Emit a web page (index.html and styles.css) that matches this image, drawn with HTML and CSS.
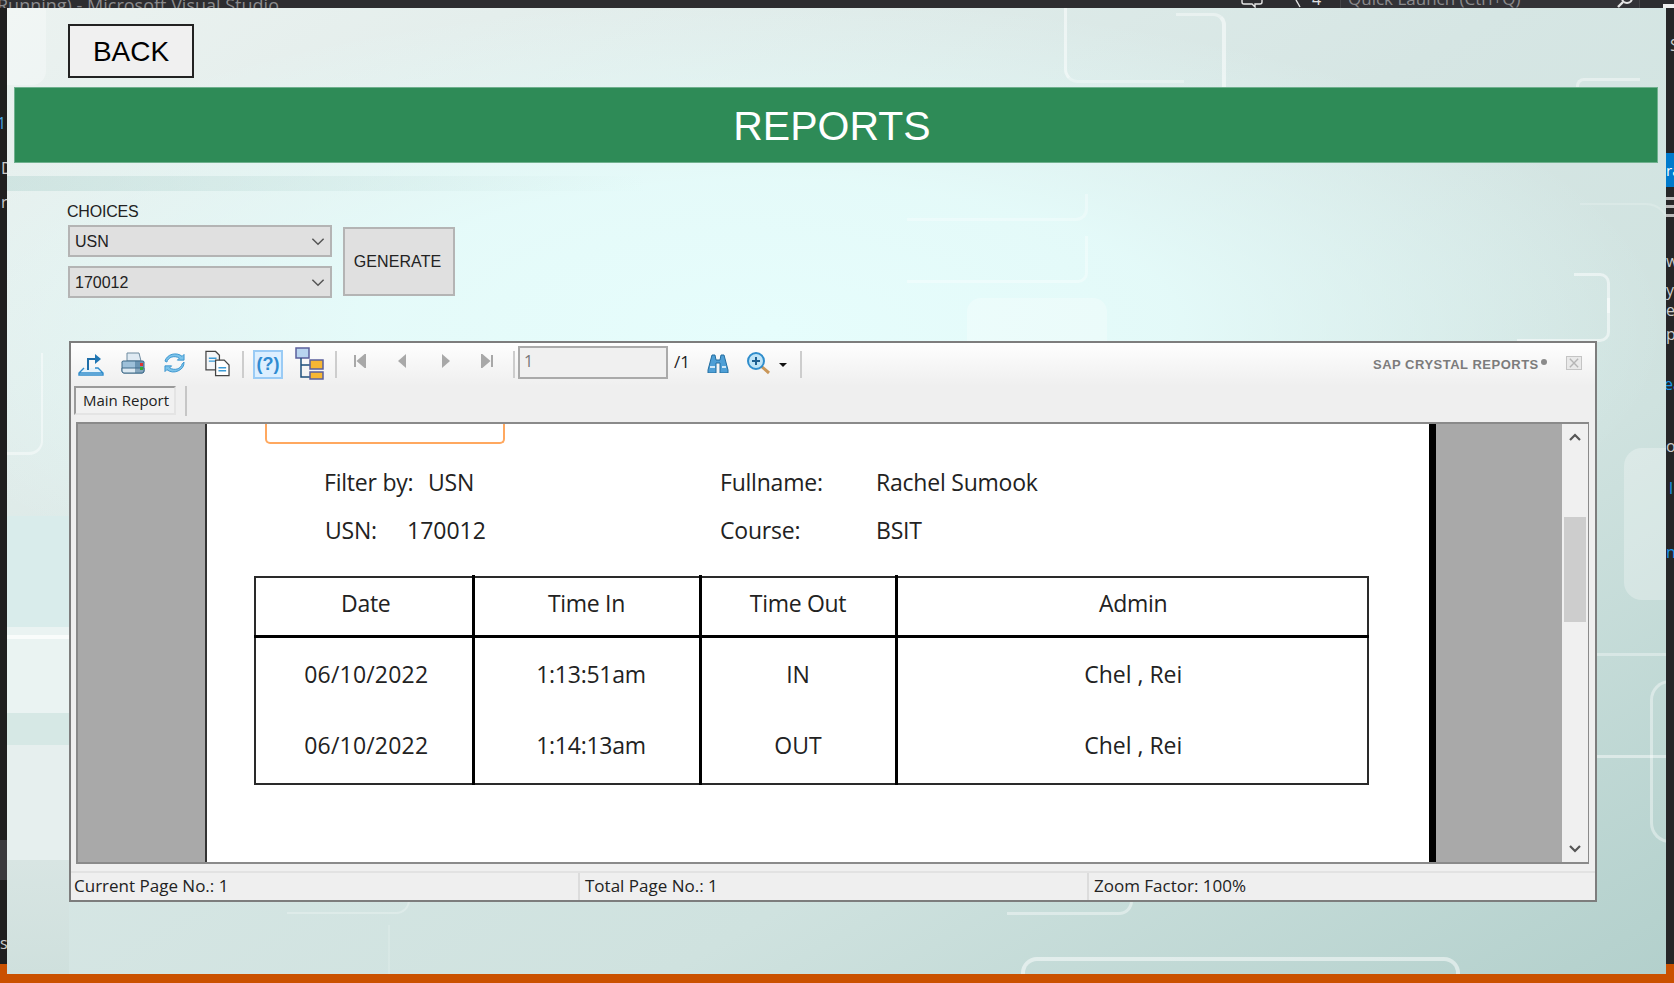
FILE: index.html
```html
<!DOCTYPE html>
<html lang="en">
<head>
<meta charset="utf-8">
<title>Reports</title>
<link rel="stylesheet" href="styles.css">
</head>
<body>
<div class="desktop">
  <div class="vs-top">
    <span class="vs-title">Running) - Microsoft Visual Studio</span>
    <svg class="vs-chat" viewBox="0 0 22 8"><path d="M1 0v2a2 2 0 0 0 2 2h8l3 3V4h5a2 2 0 0 0 2-2V0" fill="none" stroke="#e6e6e6" stroke-width="1.400"/></svg>
    <svg class="vs-flag" viewBox="0 0 6 8"><path d="M1 0l4 7" fill="none" stroke="#e6e6e6" stroke-width="1.400"/></svg>
    <span class="vs-count">4</span>
    <div class="vs-quickbox"><span class="vs-quick">Quick Launch (Ctrl+Q)</span></div>
    <svg class="vs-search" viewBox="0 0 18 8"><circle cx="11" cy="-2" r="5" fill="none" stroke="#e6e6e6" stroke-width="2"/><path d="M7 2l-5 5" stroke="#e6e6e6" stroke-width="2.400"/></svg>
    <span class="vs-corner"></span>
  </div>
  <div class="vs-left">
    <span class="vs-row"></span>
    <span class="frag frag-l1">1</span>
    <span class="frag frag-l2">D</span>
    <span class="frag frag-l3">r</span>
    <span class="frag frag-l4">s</span>
  </div>
  <div class="vs-right">
    <span class="frag frag-r1">S</span>
    <span class="vs-tab">ra</span>
    <span class="vs-burger"></span>
    <span class="frag frag-r2">w</span>
    <span class="frag frag-r3">y</span>
    <span class="frag frag-r4">e</span>
    <span class="frag frag-r5">p</span>
    <span class="frag blue frag-r6">ea</span>
    <span class="frag frag-r7">o</span>
    <span class="frag blue frag-r8">l</span>
    <span class="frag blue frag-r9">n</span>
  </div>
  <div class="vs-bottom"></div>

  <main class="window">
    <div class="band"></div>
    <div class="side-bands"></div>
    <div class="blob b1"></div>
    <div class="blob b2"></div>
    <div class="blob b3"></div>
    <div class="decor d-a"></div>
    <div class="decor d-b"></div>
    <div class="decor d-c"></div>
    <div class="decor d-d"></div>
    <div class="decor d-e"></div>
    <div class="decor d-f"></div>
    <div class="decor d-g"></div>
    <div class="decor d-h"></div>
    <div class="decor d-i"></div>
    <div class="decor d-j"></div>
    <div class="decor d-k"></div>
    <div class="decor d-l"></div>
    <div class="decor d-m"></div>
    <div class="decor d-n"></div>
    <div class="decor d-o"></div>
    <div class="decor d-p"></div>
    <div class="decor d-q"></div>

    <div class="content">
      <button class="back">BACK</button>
      <h1 class="banner">REPORTS</h1>

      <section class="controls">
        <div class="choices">
          <label class="choices-label">CHOICES</label>
          <div class="combo"><span>USN</span><svg class="chev" viewBox="0 0 12 8"><path d="M1 1.500 6 6.500 11 1.500" fill="none" stroke="#555" stroke-width="1.300"/></svg></div>
          <div class="combo"><span>170012</span><svg class="chev" viewBox="0 0 12 8"><path d="M1 1.500 6 6.500 11 1.500" fill="none" stroke="#555" stroke-width="1.300"/></svg></div>
        </div>
        <button class="generate">GENERATE</button>
      </section>

      <section class="viewer">
        <div class="toolbar">
          <svg class="ti i-export" viewBox="0 0 26 24"><path d="M6 16 1 21v2h24v-2l-5-5h-3M1 21h24" fill="#e4f2fb" stroke="#2f8ccb" stroke-width="1.400"/><path d="M10 18V7h8" fill="none" stroke="#1f6ea8" stroke-width="2"/><path d="M17 2l6 5-6 5z" fill="#1f76b4"/></svg>
          <svg class="ti i-print" viewBox="0 0 24 22"><path d="M6 9V1h12l2 8z" fill="#dfeaf3" stroke="#6f8ba0"/><path d="M2 9h20a1.500 1.500 0 0 1 1 2v8a2 2 0 0 1-2 2H3a2 2 0 0 1-2-2v-8a1.500 1.500 0 0 1 1-2z" fill="#9dc0d9" stroke="#3f6a88"/><path d="M1 16h22v3a2 2 0 0 1-2 2H3a2 2 0 0 1-2-2z" fill="#dce9f2" stroke="#3f6a88"/><path d="M14 9h9v12h-9z" fill="#3f6f92" opacity=".55"/><rect x="19" y="11" width="3" height="3" fill="#d33"/><rect x="19" y="15" width="3" height="3" fill="#3a3"/></svg>
          <svg class="ti i-refresh" viewBox="0 0 22 20"><path d="M3 9a8 7 0 0 1 13-4l-2 2h7V1l-2 2A11 10 0 0 0 1 8z" fill="#7cc3ea" stroke="#3a95cf"/><path d="M19 11a8 7 0 0 1-13 4l2-2H1v6l2-2a11 10 0 0 0 18-8z" fill="#7cc3ea" stroke="#3a95cf"/></svg>
          <svg class="ti i-copy" viewBox="0 0 26 27"><path d="M1 1h10l4 4v15H1z" fill="#f4f6f8" stroke="#444" stroke-width="1.300"/><path d="M4 8h8M4 11h8" stroke="#3b9bd6" stroke-width="1.500"/><path d="M11 10h9l5 5v11H11z" fill="#fff" stroke="#444" stroke-width="1.300"/><path d="M14 18h8M14 21h8" stroke="#3b9bd6" stroke-width="1.500"/></svg>
          <span class="tsep s1"></span>
          <span class="help">(?)</span>
          <svg class="ti i-tree" viewBox="0 0 30 33"><rect x="1" y="1" width="13" height="10" fill="#b8d4ef" stroke="#5a5f9c" stroke-width="1.500"/><path d="M6 11v19h9M6 18h9" fill="none" stroke="#1d4f7c" stroke-width="1.500"/><rect x="15" y="13" width="13" height="9" fill="#f7b733" stroke="#5a5f9c" stroke-width="1.500"/><rect x="15" y="25" width="13" height="7" fill="#f7b733" stroke="#5a5f9c" stroke-width="1.500"/></svg>
          <span class="tsep s2"></span>
          <svg class="ti i-first" viewBox="0 0 12 14"><path d="M1 1v12M11 1v12L4 7z" fill="#a8a8a8" stroke="#a8a8a8" stroke-width="2"/></svg>
          <svg class="ti i-prev" viewBox="0 0 9 14"><path d="M8 0v14L0 7z" fill="#a8a8a8"/></svg>
          <svg class="ti i-next" viewBox="0 0 9 14"><path d="M1 0v14l8-7z" fill="#a8a8a8"/></svg>
          <svg class="ti i-last" viewBox="0 0 12 14"><path d="M11 1v12M1 1v12l7-6z" fill="#a8a8a8" stroke="#a8a8a8" stroke-width="2"/></svg>
          <span class="tsep s3"></span>
          <input class="page-box" value="1" readonly>
          <span class="page-total">/1</span>
          <svg class="ti i-find" viewBox="0 0 22 19"><path d="M5 1h3l1 5h4l1-5h3l4 15v3h-8V9h-4v10H1v-3z" fill="#4e9fd6" stroke="#236d9f"/><path d="M3 13h5M15 13h4" stroke="#cfe8f8" stroke-width="2"/></svg>
          <svg class="ti i-zoom" viewBox="0 0 24 23"><path d="M14 14l8 7" stroke="#c99658" stroke-width="3"/><circle cx="9" cy="9" r="8" fill="#bfe4f7" stroke="#2f8dcc" stroke-width="2"/><path d="M5 9h8M9 5v8" stroke="#1e5f90" stroke-width="2"/></svg>
          <span class="caret"></span>
          <span class="tsep s4"></span>
          <span class="brand">SAP CRYSTAL REPORTS<i class="brand-dot"></i></span>
          <span class="close-x"><svg viewBox="0 0 15 13"><path d="M3 2l9 9M12 2l-9 9" stroke="#b5b5b5" stroke-width="1.500"/></svg></span>
        </div>
        <div class="tabs">
          <span class="tab">Main Report</span>
          <span class="tab-sep"></span>
        </div>

        <div class="report">
          <div class="gutter-left"></div>
          <div class="page">
            <div class="orange-box"></div>
            <div class="info">
              <div class="info-row">
                <span class="lbl-a">Filter by:</span><span class="val-a">USN</span>
                <span class="lbl-b">Fullname:</span><span>Rachel Sumook</span>
              </div>
              <div class="info-row">
                <span class="lbl-a2">USN:</span><span class="val-a2">170012</span>
                <span class="lbl-b">Course:</span><span>BSIT</span>
              </div>
            </div>
            <table class="rows">
              <colgroup><col class="c1"><col class="c2"><col class="c3"><col class="c4"></colgroup>
              <thead>
                <tr><th>Date</th><th>Time In</th><th>Time Out</th><th>Admin</th></tr>
              </thead>
              <tbody>
                <tr><td class="date">06/10/2022</td><td class="time">1:13:51am</td><td>IN</td><td>Chel , Rei</td></tr>
                <tr class="last"><td class="date">06/10/2022</td><td class="time">1:14:13am</td><td>OUT</td><td>Chel , Rei</td></tr>
              </tbody>
            </table>
          </div>
          <div class="page-edge"></div>
          <div class="gutter-right"></div>
          <div class="scrollbar">
            <svg class="arrow" viewBox="0 0 12 8"><path d="M1 7 6 2l5 5" fill="none" stroke="#555" stroke-width="2.200"/></svg>
            <div class="track"><div class="thumb"></div></div>
            <svg class="arrow" viewBox="0 0 12 8"><path d="M1 1l5 5 5-5" fill="none" stroke="#555" stroke-width="2.200"/></svg>
          </div>
        </div>

        <div class="status">
          <span class="st st1">Current Page No.: 1</span>
          <span class="st st2">Total Page No.: 1</span>
          <span class="st st3">Zoom Factor: 100%</span>
        </div>
      </section>
    </div>
  </main>
</div>
</body>
</html>
```
FILE: styles.css
```css
* { box-sizing: border-box; }
html, body { margin: 0; padding: 0; }
body { width: 1674px; height: 983px; overflow: hidden; background: #1e1e1e; font-family: "Liberation Sans", Arial, sans-serif; }
.desktop { position: relative; width: 1674px; height: 983px; overflow: hidden; }

/* IDE windows behind the application */
.vs-top { position: absolute; left: 0; top: 0; width: 100%; height: 8px; background: #2d2d30; overflow: hidden; color: #8b8b8d; font: 18px "Open Sans", sans-serif; }
.vs-title { position: absolute; left: -3px; top: -7px; white-space: nowrap; }
.vs-chat { position: absolute; left: 1241px; top: 0; width: 22px; height: 8px; }
.vs-flag { position: absolute; left: 1295px; top: 0; width: 6px; height: 8px; }
.vs-count { position: absolute; left: 1312px; top: -12px; color: #e0e0e0; font-size: 16px; }
.vs-quickbox { position: absolute; left: 1340px; top: 0; width: 300px; height: 8px; background: #333337; border-left: 1px solid #454548; border-right: 1px solid #454548; }
.vs-quick { position: absolute; left: 7px; top: -13px; font-size: 17px; white-space: nowrap; }
.vs-search { position: absolute; left: 1616px; top: 0; width: 18px; height: 8px; }
.vs-corner { position: absolute; right: 0; top: 4px; width: 11px; height: 4px; background: #eee; }
.vs-left { position: absolute; left: 0; top: 8px; bottom: 19px; width: 7px; background: #1f1f1f; overflow: hidden; color: #ccc; font: 16px "Open Sans", sans-serif; }
.vs-row { position: absolute; left: 0; top: 832px; width: 7px; height: 40px; background: #3a3a3d; }
.vs-right { position: absolute; right: 0; top: 8px; bottom: 19px; width: 8px; background: #262628; overflow: hidden; color: #ccc; font: 16px "Open Sans", sans-serif; }
.vs-bottom { position: absolute; left: 0; right: 0; bottom: 0; height: 19px; background: #ca5100; }
.frag { position: absolute; line-height: 20px; }
.blue { color: #1c97ea; }
.frag-l1 { left: -3px; top: 105px; color: #4aa3e0; }
.frag-l2 { left: 1px; top: 150px; }
.frag-l3 { left: 1px; top: 184px; }
.frag-l4 { left: 0; top: 925px; }
.frag-r1 { left: 4px; top: 27px; }
.frag-r2 { left: 0; top: 243px; }
.frag-r3 { left: 0; top: 272px; }
.frag-r4 { left: 0; top: 292px; }
.frag-r5 { left: 0; top: 316px; }
.frag-r6 { left: -2px; top: 366px; }
.frag-r7 { left: 0; top: 428px; }
.frag-r8 { left: 3px; top: 470px; }
.frag-r9 { left: 0; top: 534px; }
.vs-tab { position: absolute; left: 0; top: 145px; width: 8px; height: 34px; background: #007acc; color: #fff; line-height: 34px; font-size: 15px; }
.vs-burger { position: absolute; left: 0; top: 189px; width: 8px; height: 20px; border-top: 3px solid #bbb; border-bottom: 3px solid #bbb; }
.vs-burger::after { content: ""; display: block; margin-top: 5px; height: 3px; background: #bbb; }

/* Application window */
.window { position: absolute; left: 7px; top: 8px; width: 1659px; height: 966px; overflow: hidden;
  background:
    radial-gradient(ellipse 900px 330px at 760px 320px, #e6fdfc 0%, rgba(230,253,252,.85) 45%, rgba(230,253,252,0) 100%),
    linear-gradient(150deg, #ebf2f0 0%, #d6e6e4 45%, #cfe2df 70%, #b3d0cc 100%); }
.content { position: relative; display: flex; flex-direction: column; height: 100%; }
.band { position: absolute; left: 0; top: 168px; width: 640px; height: 15px; background: linear-gradient(90deg, rgba(165,205,200,.35), rgba(165,205,200,0)); }
.side-bands { position: absolute; left: 0; top: 508px; width: 62px; height: 458px;
  background: linear-gradient(#d9eceb 0, #d9eceb 111px, #eaf3f2 111px, #eaf3f2 197px, #d6e8e5 197px, #d6e8e5 229px, #e6efee 229px, #e6efee 344px, #d8e5e3 344px, #cfe0dd 458px); }
.decor { position: absolute; border: 0 solid rgba(255,255,255,.5); }
.d-a { left: 1057px; top: -20px; width: 120px; height: 95px; border-width: 0 0 3px 3px; border-radius: 0 0 0 14px; border-bottom-color: rgba(255,255,255,.3); }
.d-b { left: 1169px; top: 5px; width: 50px; height: 90px; border-width: 3px 4px 0 0; border-radius: 0 12px 0 0; border-top-color: rgba(255,255,255,.4); }
.d-c { left: 900px; top: 186px; width: 181px; height: 27px; border-width: 0 3px 3px 0; border-radius: 0 0 12px 0; border-color: rgba(255,255,255,.3); }
.d-d { left: 900px; top: 228px; width: 181px; height: 47px; border-width: 0 3px 3px 0; border-radius: 0 0 10px 0; border-color: rgba(255,255,255,.35); }
.d-e { left: 1567px; top: 265px; width: 36px; height: 40px; border-width: 3px 3px 0 0; border-radius: 0 10px 0 0; }
.d-f { left: 1510px; top: 290px; width: 93px; height: 44px; border-width: 0 3px 3px 0; border-radius: 0 0 10px 0; }
.d-g { left: 1569px; top: 70px; width: 64px; height: 20px; border-width: 3px 0 0 3px; border-radius: 8px 0 0 0; border-color: rgba(255,255,255,.4); }
.d-h { left: 1573px; top: 195px; width: 90px; height: 30px; border-width: 2px 2px 0 0; border-radius: 0 24px 0 0; border-color: rgba(255,255,255,.18); }
.d-i { left: 1014px; top: 949px; width: 439px; height: 40px; border-width: 4px 4px 0 4px; border-radius: 16px 16px 0 0; border-color: rgba(255,255,255,.5); }
.d-j { left: 1000px; top: 880px; width: 126px; height: 27px; border-width: 0 3px 3px 0; border-radius: 0 0 14px 0; border-color: rgba(255,255,255,.4); }
.d-k { left: 280px; top: 880px; width: 123px; height: 26px; border-width: 0 2px 2px 0; border-radius: 0 0 14px 0; border-color: rgba(255,255,255,.25); }
.d-l { left: 381px; top: 917px; width: 3px; height: 60px; border-width: 0 0 0 2px; border-color: rgba(255,255,255,.15); }
.d-m { left: 1643px; top: 672px; width: 40px; height: 163px; border-width: 3px 0 3px 3px; border-radius: 20px 0 0 20px; border-color: rgba(255,255,255,.4); }
.d-n { left: 1590px; top: 747px; width: 69px; height: 3px; border-width: 3px 0 0 0; border-color: rgba(255,255,255,.45); }
.d-o { left: 1590px; top: 645px; width: 69px; height: 3px; border-width: 3px 0 0 0; border-color: rgba(255,255,255,.35); }
.d-p { left: 0; top: 627px; width: 62px; height: 4px; border-width: 4px 0 0 0; border-color: rgba(255,255,255,.7); }
.d-q { left: -30px; top: 345px; width: 66px; height: 102px; border-width: 0 2px 3px 0; border-radius: 0 0 14px 0; border-color: rgba(255,255,255,.45); }
.blob { position: absolute; border-radius: 18px; }
.b1 { left: 1617px; top: 440px; width: 80px; height: 152px; background: rgba(255,255,255,.28); }
.b2 { left: 0; top: 0; width: 39px; height: 77px; background: rgba(255,255,255,.3); border-radius: 0 0 14px 0; }
.b3 { left: 960px; top: 290px; width: 140px; height: 60px; background: rgba(255,255,255,.28); border-radius: 14px; }

.back { align-self: flex-start; margin: 16px 0 0 61px; width: 126px; height: 54px; padding: 2px 0 0; background: #f0f0f0; border: 2px solid #222; outline: 0; font: 28px "Liberation Sans", sans-serif; color: #000; }
.banner { margin: 9px 8px 0 7px; height: 76px; padding-right: 8px; background: #2e8b57; border: 1px solid #6fb08e; color: #fff; text-align: center; font: 400 41px/76px "Liberation Sans", sans-serif; }

.controls { display: flex; align-items: flex-end; margin: 38px 0 0 61px; }
.choices { display: flex; flex-direction: column; width: 264px; }
.choices-label { font: 16px/22px "Liberation Sans", sans-serif; color: #222; letter-spacing: -.2px; margin-left: -1px; height: 24px; }
.combo { display: flex; align-items: center; justify-content: space-between; height: 32px; padding: 1px 5px 0 5px; background: #e0e0e0; border: 2px solid #b4b4b4; font: 16px "Liberation Sans", sans-serif; color: #222; }
.combo + .combo { margin-top: 9px; }
.chev { width: 14px; height: 9px; }
.generate { margin: 0 0 2px 11px; width: 112px; height: 69px; padding: 0 3px 0 0; background: #e0e0e0; border: 2px solid #b4b4b4; font: 16px "Liberation Sans", sans-serif; letter-spacing: .1px; color: #222; }

.viewer { display: flex; flex-direction: column; margin: 43px 0 0 62px; width: 1528px; height: 561px; background: #efefef; border: 2px solid #7d7d7d; font-family: "Open Sans", sans-serif; }
.toolbar { position: relative; height: 43px; flex: none; background: linear-gradient(#fefefe, #efefef); }
.ti { position: absolute; display: block; }
.i-export { left: 7px; top: 9px; width: 26px; height: 24px; }
.i-print { left: 50px; top: 9px; width: 24px; height: 22px; }
.i-refresh { left: 93px; top: 10px; width: 21px; height: 20px; }
.i-copy { left: 134px; top: 7px; width: 25px; height: 27px; }
.tsep { position: absolute; top: 8px; width: 2px; height: 27px; background: #cdcdcd; }
.s1 { left: 171px; } .s2 { left: 264px; } .s3 { left: 442px; } .s4 { left: 729px; }
.help { position: absolute; left: 182px; top: 7px; width: 30px; height: 29px; border: 2px solid #9acbf5; background: #dcefff; color: #2f8bd1; font: 700 18px/25px "Liberation Sans", sans-serif; text-align: center; }
.i-tree { left: 224px; top: 4px; width: 30px; height: 33px; }
.i-first { left: 283px; top: 11px; width: 12px; height: 14px; }
.i-prev { left: 327px; top: 11px; width: 9px; height: 14px; }
.i-next { left: 370px; top: 11px; width: 9px; height: 14px; }
.i-last { left: 410px; top: 11px; width: 12px; height: 14px; }
.page-box { position: absolute; left: 447px; top: 3px; width: 150px; height: 33px; background: #f0f0f0; border: 2px solid #aaa; padding: 0 0 4px 4px; font: 16px "Open Sans", sans-serif; color: #777; outline: 0; }
.page-total { position: absolute; left: 603px; top: 8px; font: 17px/22px "Open Sans", sans-serif; color: #222; }
.i-find { left: 636px; top: 11px; width: 22px; height: 19px; }
.i-zoom { left: 676px; top: 9px; width: 24px; height: 23px; }
.caret { position: absolute; left: 708px; top: 20px; border: 4px solid transparent; border-top: 4px solid #111; border-bottom: 0; }
.brand { position: absolute; left: 1302px; top: 14px; font: 700 13px/16px "Liberation Sans", sans-serif; color: #7c7c7c; letter-spacing: .5px; white-space: nowrap; }
.brand-dot { display: inline-block; width: 6px; height: 6px; margin: 0 0 4px 2px; border-radius: 50%; background: #8b8b8b; }
.close-x { position: absolute; left: 1495px; top: 13px; width: 16px; height: 14px; border: 1px solid #c4c4c4; background: #e9e9e9; }
.close-x svg { display: block; width: 14px; height: 12px; }

.tabs { display: flex; align-items: flex-start; height: 36px; flex: none; padding-left: 3px; }
.tab { width: 102px; height: 29px; border: 2px solid #9a9a9a; border-right-color: #e4e4e4; border-bottom-color: #e4e4e4; background: #f1f1f1; font: 15px/24px "Open Sans", sans-serif; color: #222; padding-left: 7px; white-space: nowrap; }
.tab-sep { width: 2px; height: 30px; margin-left: 9px; background: #c6c6c6; }

.report { display: flex; flex: none; height: 442px; margin: 0 6px 0 5px; border: 2px solid #8a8a8a; border-right-width: 1px; background: #fff; }
.gutter-left { width: 129px; background: #a9a9a9; border-right: 2px solid #333; flex: none; }
.page { flex: 1; min-width: 0; overflow: hidden; background: #fff; color: #222; font: 23px "Open Sans", sans-serif; }
.page-edge { width: 7px; flex: none; background: #000; }
.gutter-right { width: 126px; flex: none; background: #a9a9a9; }
.scrollbar { width: 26px; flex: none; display: flex; flex-direction: column; align-items: center; background: #f0f0f0; }
.arrow { width: 12px; height: 8px; margin: 9px 0; flex: none; }
.track { flex: 1; width: 100%; padding: 67px 2px 0; }
.thumb { height: 105px; background: #cdcdcd; }

.orange-box { width: 240px; height: 20px; margin-left: 58px; border: 2px solid #ffa85f; border-top: 0; border-radius: 0 0 5px 5px; }
.info { margin: 14px 0 0 117px; }
.info-row { display: grid; grid-template-columns: 104px 292px 156px 1fr; height: 48px; line-height: 48px; white-space: nowrap; letter-spacing: -.22px; }
.lbl-a2 { padding-left: 1px; }
.val-a2 { margin-left: -21px; letter-spacing: 0; }
.rows { margin: 22px 0 0 47px; width: 1113px; table-layout: fixed; border-collapse: collapse; border: 2px solid #2a2a2a; }
.c1 { width: 218px; } .c2 { width: 227px; } .c3 { width: 196px; } .c4 { width: 472px; }
.rows th { position: relative; height: 59px; padding: 0 0 6px; font-weight: 400; letter-spacing: -.3px; border-bottom: 3px solid #000; }
.rows td { height: 74px; padding: 0; }
.rows th, .rows td { text-align: center; border-left: 3px solid #000; }
.rows th:first-child, .rows td:first-child { border-left: 0; }
.rows th:first-child { padding-left: 4px; }
.rows th + th::before { content: ""; position: absolute; left: -3px; top: -3px; width: 3px; height: 3px; background: #000; }
.rows th:last-child::before { display: block; }
.rows td:last-child { padding-left: 2px; }
.rows th:last-child { padding-left: 2px; }
.rows .date { padding-left: 5px; letter-spacing: .2px; }
.rows .time { padding-left: 9px; letter-spacing: -.25px; }
.rows .last td { padding-bottom: 3px; }

.status { display: flex; height: 29px; margin-top: 7px; border-top: 2px solid #e2e2e2; font: 17px/25px "Open Sans", sans-serif; color: #222; }
.st { padding-left: 3px; white-space: nowrap; }
.st1 { width: 509px; border-right: 2px solid #dcdcdc; }
.st2 { width: 509px; padding-left: 5px; border-right: 2px solid #dcdcdc; }
.st3 { padding-left: 5px; }
```
